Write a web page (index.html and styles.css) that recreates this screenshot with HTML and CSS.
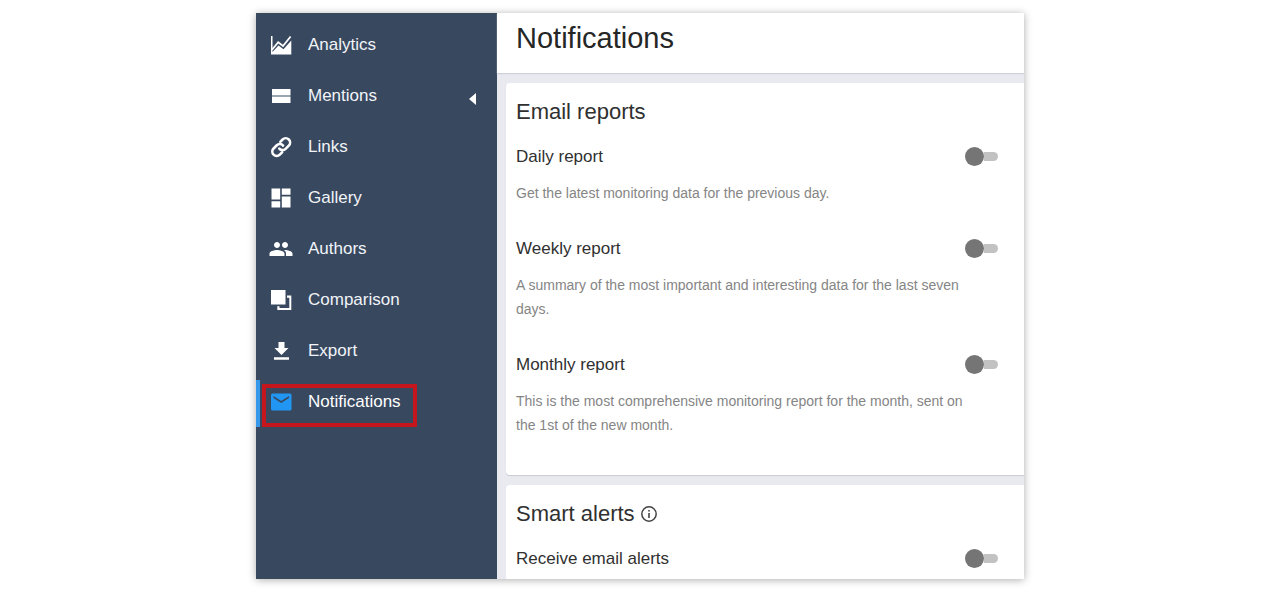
FILE: index.html
```html
<!DOCTYPE html>
<html lang="en">
<head>
<meta charset="utf-8">
<title>Notifications</title>
<link rel="stylesheet" href="styles.css">
</head>
<body>
<div class="app">
  <nav class="sidebar">
    <a class="nav-item" href="#">
      <svg class="icon" viewBox="0 0 24 24"><path d="M2 3h1.500v18.500H2zM2.500 20 9.500 12.500l5 3.800L22.300 7.500v14H2.500z"/><path class="line" d="M3 16.800 9.200 9.300l4.800 3.700 7.600-9.500"/></svg>
      <span>Analytics</span>
    </a>
    <a class="nav-item" href="#">
      <svg class="icon" viewBox="0 0 24 24"><path d="M3 5h18.500v6.600H3zM3 12.500h18.500V19H3z"/></svg>
      <span>Mentions</span>
      <svg class="caret" viewBox="0 0 7 12"><path d="M7 0v12L0 6z"/></svg>
    </a>
    <a class="nav-item" href="#">
      <svg class="icon" viewBox="0 0 24 24"><path class="chain" d="M10.300 13.600a4.300 4.300 0 0 0 6.300.300l3.200-3.200a4.300 4.300 0 0 0-6.200-6.200L11.300 6.800M14.100 10.600a4.300 4.300 0 0 0-6.300-.300l-3.200 3.200a4.300 4.300 0 0 0 6.200 6.200l2.300-2.300"/></svg>
      <span>Links</span>
    </a>
    <a class="nav-item" href="#">
      <svg class="icon" viewBox="0 0 24 24"><path d="M2.500 2.500h8.700v11H2.500zM2.500 15.300h8.700v6.200H2.500zM12.800 10.500h8.700v11h-8.700zM12.800 2.500h8.700v6.200h-8.700z"/></svg>
      <span>Gallery</span>
    </a>
    <a class="nav-item" href="#">
      <svg class="icon" viewBox="0 0 24 24"><path d="M16 11c1.660 0 2.990-1.340 2.990-3S17.660 5 16 5s-3 1.340-3 3 1.340 3 3 3zm-8 0c1.660 0 2.990-1.340 2.990-3S9.660 5 8 5 5 6.340 5 8s1.340 3 3 3zm0 2c-2.330 0-7.500 1.170-7.500 3.500V19h15v-2.500C15.500 14.170 10.330 13 8 13zm8 0c-.290 0-.620.020-.970.050 1.160.840 1.970 1.970 1.970 3.450V19h6.500v-2.500c0-2.330-5.170-3.500-7.500-3.500z"/></svg>
      <span>Authors</span>
    </a>
    <a class="nav-item" href="#">
      <svg class="icon" viewBox="0 0 24 24"><path d="M2 2h14.500v14.500H2zM18 7.500h4.300V22H8.300v-3.800h2.200V20H20.300V9.700H18z"/></svg>
      <span>Comparison</span>
    </a>
    <a class="nav-item" href="#">
      <svg class="icon" viewBox="0 0 24 24"><path d="M19.500 9H15.500V3h-6v6H5.500l7 7zM5 18.300v2.400h15v-2.400z"/></svg>
      <span>Export</span>
    </a>
    <a class="nav-item active" href="#" aria-current="page">
      <svg class="icon" viewBox="0 0 24 24"><path d="M21 3.500H3.500Q2 3.500 2 5v14q0 1.500 1.500 1.500H21q1.500 0 1.500-1.500V5q0-1.500-1.500-1.500zM20 8l-7.800 5L4.500 8V6l7.700 5L20 6z"/></svg>
      <span>Notifications</span>
    </a>
  </nav>
  <main class="main">
    <header class="page-header"><h1 class="page-title">Notifications</h1></header>
    <div class="cards">
      <section class="card reports">
        <h2 class="card-title">Email reports</h2>
        <div class="setting">
          <div class="row"><label for="daily">Daily report</label><input class="toggle" type="checkbox" role="switch" id="daily"></div>
          <p class="hint">Get the latest monitoring data for the previous day.</p>
        </div>
        <div class="setting">
          <div class="row"><label for="weekly">Weekly report</label><input class="toggle" type="checkbox" role="switch" id="weekly"></div>
          <p class="hint">A summary of the most important and interesting data for the last seven days.</p>
        </div>
        <div class="setting">
          <div class="row"><label for="monthly">Monthly report</label><input class="toggle" type="checkbox" role="switch" id="monthly"></div>
          <p class="hint">This is the most comprehensive monitoring report for the month, sent on the 1st of the new month.</p>
        </div>
      </section>
      <section class="card alerts">
        <h2 class="card-title">Smart alerts
          <svg class="info" viewBox="0 0 18 18"><circle cx="9" cy="9" r="7.200" fill="none" stroke="#444" stroke-width="1.500"/><path d="M8.200 8h1.600v5H8.200zM8.200 5h1.600v1.600H8.200z" fill="#444"/></svg>
        </h2>
        <div class="row"><label for="alerts">Receive email alerts</label><input class="toggle" type="checkbox" role="switch" id="alerts"></div>
      </section>
    </div>
  </main>
</div>
</body>
</html>
```
FILE: styles.css
```css
*, *::before, *::after { box-sizing: border-box; }

body {
  margin: 0;
  padding: 13px 0 14px;
  background: #fff;
  color: #303030;
  font-family: "Liberation Sans", Arial, sans-serif;
  font-size: 17px;
  line-height: 24px;
}

h1, h2, p { margin: 0; font-weight: 400; }

.app {
  display: flex;
  width: 60%;
  min-width: 640px;
  margin: 0 auto;
  box-shadow: 0 1px 8px rgba(0, 0, 0, 0.32);
}

.sidebar {
  flex: 0 0 241px;
  display: flex;
  flex-direction: column;
  padding-top: 6px;
  background: #38485f;
}

.nav-item {
  position: relative;
  display: flex;
  align-items: center;
  gap: 15px;
  height: 51px;
  padding: 0 21px 0 13px;
  color: #f1f4f8;
  text-decoration: none;
}

.icon { width: 24px; height: 24px; fill: #fff; }
.line { fill: none; stroke: #fff; stroke-width: 1.8; }
.chain { fill: none; stroke: #fff; stroke-width: 2.6; stroke-linecap: round; }
.caret { width: 7px; height: 12px; margin: 6px 0 0 auto; fill: #fff; }

.active { color: #fff; }
.active .icon { fill: #2196f3; }

.active::before {
  content: "";
  position: absolute;
  left: 0;
  top: 4px;
  width: 4px;
  height: 47px;
  background: #3598ea;
}

.active::after {
  content: "";
  position: absolute;
  left: 6px;
  top: 8px;
  width: 155px;
  height: 43px;
  border: 4px solid #c4161c;
}

.main { flex: 1; min-width: 0; background: #e9eaf0; }

.page-header {
  padding: 8px 19px 18px;
  background: #fff;
  box-shadow: 0 1px 1px #cfd0d8;
}

.page-title { color: #262626; font-size: 29px; line-height: 34px; }

.cards {
  display: flex;
  flex-direction: column;
  gap: 10px;
  padding: 10px 0 0 9px;
}

.card {
  padding: 15px 26px 0 10px;
  background: #fff;
  border-radius: 4px 0 0 4px;
  box-shadow: 0 1px 1px #c9cad2;
}

.reports { padding-bottom: 38px; }
.alerts { padding-bottom: 8px; border-bottom-left-radius: 0; box-shadow: none; }

.card-title {
  display: flex;
  align-items: center;
  gap: 5px;
  margin-bottom: 19px;
  font-size: 22px;
  line-height: 28px;
}

.info { width: 18px; height: 18px; }

.setting + .setting { margin-top: 32px; }

.row { display: flex; align-items: center; justify-content: space-between; }

.hint {
  margin-top: 12px;
  padding-right: 24px;
  color: #858585;
  font-size: 14px;
}

.toggle {
  appearance: none;
  display: flex;
  align-items: center;
  width: 33px;
  height: 19px;
  margin: 0 0 2px;
}

.toggle::before {
  content: "";
  width: 19px;
  height: 19px;
  border-radius: 50%;
  background: #757575;
}

.toggle::after {
  content: "";
  width: 14px;
  height: 9px;
  border-radius: 0 5px 5px 0;
  background: #c2c2c2;
}

.toggle:checked { flex-direction: row-reverse; }
.toggle:checked::before { background: #2196f3; }
.toggle:checked::after { border-radius: 5px 0 0 5px; }
```
